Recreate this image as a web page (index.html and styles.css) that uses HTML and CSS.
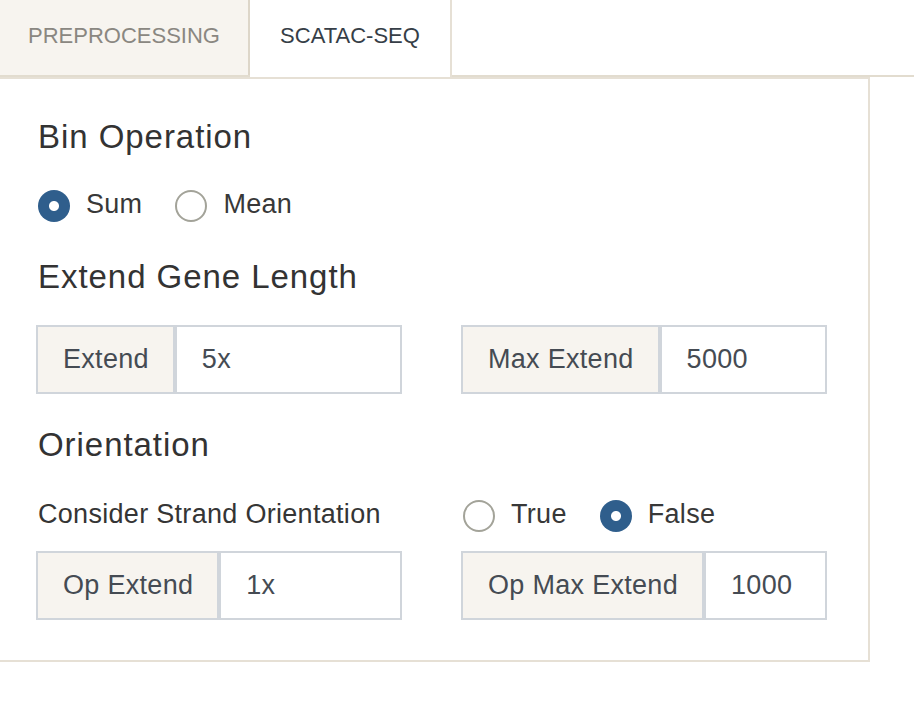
FILE: index.html
```html
<!DOCTYPE html>
<html lang="en">
<head>
<meta charset="utf-8">
<title>scATAC-seq settings</title>
<link rel="stylesheet" href="styles.css">
</head>
<body>
<div class="tabs">
  <div class="tab">PREPROCESSING</div>
  <div class="tab active">SCATAC-SEQ</div>
</div>
<div class="panel">
  <h2 class="heading">Bin Operation</h2>
  <div class="radios first">
    <label class="radio"><span class="dot checked"></span><span class="txt">Sum</span></label>
    <label class="radio"><span class="dot"></span><span class="txt">Mean</span></label>
  </div>

  <h2 class="heading h-extend">Extend Gene Length</h2>
  <div class="grid g-extend">
    <div class="group"><span class="addon">Extend</span><span class="field">5x</span></div>
    <div class="group"><span class="addon">Max Extend</span><span class="field">5000</span></div>
  </div>

  <h2 class="heading h-orient">Orientation</h2>
  <div class="grid g-label">
    <div class="label">Consider Strand Orientation</div>
    <div class="radios">
      <label class="radio"><span class="dot"></span><span class="txt">True</span></label>
      <label class="radio"><span class="dot checked"></span><span class="txt">False</span></label>
    </div>
  </div>
  <div class="grid g-op">
    <div class="group"><span class="addon">Op Extend</span><span class="field">1x</span></div>
    <div class="group"><span class="addon">Op Max Extend</span><span class="field">1000</span></div>
  </div>
</div>
</body>
</html>
```

FILE: styles.css
```css
body {
  margin: 0;
  background: #ffffff;
  font-family: "Liberation Sans", Arial, Helvetica, sans-serif;
}

.tabs {
  display: flex;
  height: 75px;
  border-bottom: 2px solid #e2dccf;
}

.tab {
  box-sizing: border-box;
  width: 250px;
  height: 75px;
  padding-bottom: 4px;
  display: flex;
  align-items: center;
  justify-content: center;
  font-size: 22px;
  color: #8a8781;
  background: #f7f4ef;
  border-right: 2px solid #ddd6c9;
}

.tab.active {
  width: 202px;
  height: 77px;
  margin-bottom: -2px;
  padding-bottom: 6px;
  background: #ffffff;
  color: #363e47;
  border-right: 2px solid #e6e0d5;
  position: relative;
}

.panel {
  box-sizing: border-box;
  width: 870px;
  border: 2px solid #e6e0d5;
  border-left: none;
  padding: 38px 41px 40px 36px;
}

.heading {
  margin: 0;
  padding-left: 2px;
  font-size: 33px;
  line-height: 40px;
  font-weight: normal;
  letter-spacing: 0.95px;
  color: #333333;
}

.h-extend { margin-top: 35px; }
.h-orient { margin-top: 31px; }

.radios {
  display: flex;
  align-items: center;
  height: 32px;
  gap: 33px;
}

.radios.first { margin-top: 33px; }

.radio {
  display: flex;
  align-items: center;
  gap: 16px;
  margin-left: 2px;
  font-size: 27px;
  letter-spacing: 0.3px;
  color: #383838;
}

.radio + .radio { margin-left: 0; }

.txt {
  line-height: 32px;
  margin-bottom: 4px;
}

.dot {
  box-sizing: border-box;
  width: 32px;
  height: 32px;
  border-radius: 50%;
  border: 2px solid #a3a399;
  background: #ffffff;
  flex: none;
}

.dot.checked {
  border: none;
  background: radial-gradient(circle, #ffffff 0 4.5px, #2f5e8c 5.5px);
}

.grid {
  display: grid;
  grid-template-columns: 366px 366px;
  column-gap: 59px;
}

.g-extend { margin-top: 28px; }
.g-label { margin-top: 33px; align-items: center; height: 32px; }
.g-op { margin-top: 21px; }

.label {
  padding-left: 2px;
  font-size: 27px;
  line-height: 32px;
  letter-spacing: 0.3px;
  color: #353535;
  margin-bottom: 4px;
}

.group {
  display: flex;
  height: 69px;
}

.addon,
.field {
  box-sizing: border-box;
  display: flex;
  align-items: center;
  padding: 0 24px 0 25px;
  font-size: 27px;
  letter-spacing: 0.3px;
  color: #454b53;
  border: 2px solid #d0d5db;
}

.addon {
  background: #f7f4ef;
  white-space: nowrap;
}

.field {
  flex: 1;
  background: #ffffff;
}
```
